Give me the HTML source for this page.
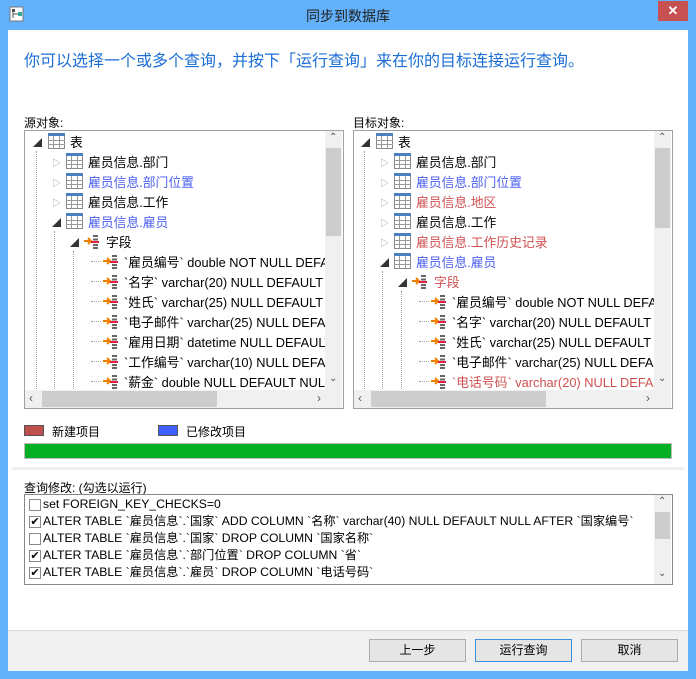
<!DOCTYPE html>
<html><head><meta charset="utf-8"><style>
*{margin:0;padding:0;box-sizing:border-box}
body{width:696px;height:679px;background:#63b1fa;font-family:"Liberation Sans","Noto Sans CJK SC",sans-serif;font-size:12px;color:#000;position:relative;overflow:hidden}
.a{position:absolute;white-space:nowrap}
.client{position:absolute;left:8px;top:30px;width:680px;height:641px;background:#fff}
.box{position:absolute;border:1px solid #a0a0a0;background:#fff;overflow:hidden}
.t{font-size:12.8px}
.b{color:#4a5ef0}.r{color:#d05050}
.vs{position:absolute;background:#f0f0f0}
.th{position:absolute;background:#cdcdcd}
.btn{position:absolute;top:639px;width:97px;height:23px;border:1px solid #adadad;background:#e5e5e5;text-align:center;line-height:21px;font-size:12px}
.dl{position:absolute;border-left:1px dotted #a0a0a0;width:0}
.dh{position:absolute;border-top:1px dotted #a0a0a0;height:0;width:10px}
.cb{position:absolute;width:12px;height:12px;border:1px solid #8a8a8a;background:#fff;font-size:11px;line-height:10px;text-align:center}
.q{font-size:12.2px;line-height:15px}
</style></head><body>
<svg class="a" style="left:9px;top:6px" width="16" height="16"><rect x="1" y="1" width="13" height="14" fill="#fff" stroke="#777"/><rect x="3" y="3" width="3" height="3" fill="#555"/><rect x="9" y="6" width="4" height="4" fill="#3a9"/><path d="M4 6v6M4 8h5" stroke="#555"/></svg>
<div class="a" style="left:0;width:696px;top:6px;text-align:center;font-size:14px;color:#222">同步到数据库</div>
<div class="a" style="left:658px;top:1px;width:30px;height:20px;background:#c75050;color:#fff;text-align:center;font-size:13px;line-height:19px;font-weight:bold">✕</div>
<div class="client"></div>
<div class="a" style="left:24px;top:47px;font-size:16px;color:#1c6ed4">你可以选择一个或多个查询，并按下「运行查询」来在你的目标连接运行查询。</div>
<div class="a" style="left:24px;top:114px">源对象:</div>
<div class="a" style="left:353px;top:114px">目标对象:</div>

<div class="box" style="left:24px;top:130px;width:320px;height:279px">
<div class="dl" style="left:11px;top:20px;height:240px"></div>
<div class="dl" style="left:29px;top:100px;height:160px"></div>
<div class="dl" style="left:48px;top:120px;height:140px"></div>
</div>
<div class="box" style="left:353px;top:130px;width:320px;height:279px">
<div class="dl" style="left:10px;top:20px;height:240px"></div>
<div class="dl" style="left:28px;top:140px;height:120px"></div>
<div class="dl" style="left:47px;top:160px;height:100px"></div>
</div>

<div id="trees"></div>
<script>
function ti(x,y){return '<svg class="a" style="left:'+x+'px;top:'+y+'px" width="17" height="16"><rect x="0.5" y="0.5" width="16" height="15" fill="#fff" stroke="#888"/><rect x="0" y="0" width="17" height="3" fill="#4a7fc1"/><path d="M0 7.5h17M0 11.5h17M5.5 3v13M11.5 3v13" stroke="#999"/></svg>';}
function fi(x,y){return '<svg class="a" style="left:'+x+'px;top:'+y+'px" width="18" height="16"><path d="M1 8h7M5 5l3 3-3 3" stroke="#f08000" stroke-width="2" fill="none"/><rect x="10" y="2" width="5" height="2" fill="#666"/><rect x="10" y="5.5" width="5" height="2" fill="#666"/><rect x="8" y="8" width="8" height="2" fill="#e02040"/><rect x="10" y="11" width="5" height="2" fill="#666"/><rect x="10" y="14" width="5" height="2" fill="#666"/></svg>';}
function tri(x,y,open){return '<div class="a" style="left:'+x+'px;top:'+y+'px;font-size:9px;color:'+(open?'#333':'#a0a0a0')+'">'+(open?'◢':'▷')+'</div>';}
function tree(ox,rows){
 var h='';
 rows.forEach(function(r,i){
  var y=1+i*20;
  var lvl=r[0],t=r[1],c=r[2]||'',k=r[3];
  if(lvl==0){h+=tri(ox+9,y+4,1)+ti(ox+24,y+1)+'<div class="a t '+c+'" style="left:'+(ox+46)+'px;top:'+(y)+'px">'+t+'</div>';}
  if(lvl==1){h+=tri(ox+28,y+4,k)+ti(ox+42,y+1)+'<div class="a t '+c+'" style="left:'+(ox+64)+'px;top:'+(y)+'px">'+t+'</div>';}
  if(lvl==2){h+=tri(ox+46,y+4,1)+fi(ox+59,y+1)+'<div class="a t '+c+'" style="left:'+(ox+82)+'px;top:'+(y)+'px">'+t+'</div>';}
  if(lvl==3){h+='<div class="dh" style="left:'+(ox+67)+'px;top:'+(y+9)+'px"></div>'+fi(ox+78,y+1)+'<div class="a t '+c+'" style="left:'+(ox+100)+'px;top:'+(y)+'px">'+t+'</div>';}
 });
 return h;
}
var L=[[0,'表'],[1,'雇员信息.部门'],[1,'雇员信息.部门位置','b'],[1,'雇员信息.工作'],[1,'雇员信息.雇员','b',1],[2,'字段'],
[3,'`雇员编号` double NOT NULL DEFAULT'],[3,'`名字` varchar(20) NULL DEFAULT NULL'],[3,'`姓氏` varchar(25) NULL DEFAULT NULL'],[3,'`电子邮件` varchar(25) NULL DEFAULT'],[3,'`雇用日期` datetime NULL DEFAULT NULL'],[3,'`工作编号` varchar(10) NULL DEFAULT'],[3,'`薪金` double NULL DEFAULT NULL']];
var R=[[0,'表'],[1,'雇员信息.部门'],[1,'雇员信息.部门位置','b'],[1,'雇员信息.地区','r'],[1,'雇员信息.工作'],[1,'雇员信息.工作历史记录','r'],[1,'雇员信息.雇员','b',1],[2,'字段','r'],
[3,'`雇员编号` double NOT NULL DEFAULT'],[3,'`名字` varchar(20) NULL DEFAULT NULL'],[3,'`姓氏` varchar(25) NULL DEFAULT NULL'],[3,'`电子邮件` varchar(25) NULL DEFAULT'],[3,'`电话号码` varchar(20) NULL DEFAULT','r']];
var h='<div class="a" style="left:25px;top:131px;width:300px;height:259px;overflow:hidden">'+tree(-1,L)+'</div>';
h+='<div class="a" style="left:354px;top:131px;width:300px;height:259px;overflow:hidden">'+tree(-2,R)+'</div>';
document.getElementById('trees').innerHTML=h;
</script>

<div class="vs" style="left:325px;top:131px;width:17px;height:259px"></div>
<div class="th" style="left:326px;top:148px;width:15px;height:88px"></div>
<div class="a" style="left:329px;top:132px;font-size:10px;color:#555">⌃</div>
<div class="a" style="left:329px;top:373px;font-size:10px;color:#555">⌄</div>
<div class="vs" style="left:25px;top:390px;width:317px;height:18px"></div>
<div class="th" style="left:42px;top:391px;width:175px;height:16px"></div>
<div class="a" style="left:29px;top:391px;font-size:12px;color:#555">‹</div>
<div class="a" style="left:317px;top:391px;font-size:12px;color:#555">›</div>

<div class="vs" style="left:654px;top:131px;width:17px;height:259px"></div>
<div class="th" style="left:655px;top:148px;width:15px;height:80px"></div>
<div class="a" style="left:658px;top:132px;font-size:10px;color:#555">⌃</div>
<div class="a" style="left:658px;top:373px;font-size:10px;color:#555">⌄</div>
<div class="vs" style="left:354px;top:390px;width:317px;height:18px"></div>
<div class="th" style="left:371px;top:391px;width:175px;height:16px"></div>
<div class="a" style="left:358px;top:391px;font-size:12px;color:#555">‹</div>
<div class="a" style="left:646px;top:391px;font-size:12px;color:#555">›</div>

<div class="a" style="left:24px;top:425px;width:20px;height:11px;background:#c0504d;border:1px solid #555"></div>
<div class="a" style="left:52px;top:423px">新建项目</div>
<div class="a" style="left:158px;top:425px;width:20px;height:11px;background:#4060ff;border:1px solid #555"></div>
<div class="a" style="left:186px;top:423px">已修改项目</div>
<div class="a" style="left:24px;top:443px;width:648px;height:16px;background:#06b025;border:1px solid #bcbcbc"></div>
<div class="a" style="left:12px;top:467px;width:672px;height:3px;background:#f0f0f0"></div>

<div class="a" style="left:24px;top:479px">查询修改: (勾选以运行)</div>
<div class="box" style="left:24px;top:494px;width:649px;height:91px;border-color:#828790"></div>
<div class="vs" style="left:654px;top:495px;width:17px;height:89px"></div>
<div class="th" style="left:655px;top:512px;width:15px;height:27px"></div>
<div class="a" style="left:658px;top:496px;font-size:10px;color:#555">⌃</div>
<div class="a" style="left:658px;top:568px;font-size:10px;color:#555">⌄</div>
<div class="cb" style="left:29px;top:499px"></div><div class="a q" style="left:43px;top:497px">set FOREIGN_KEY_CHECKS=0</div>
<div class="cb" style="left:29px;top:516px">✔</div><div class="a q" style="left:43px;top:514px">ALTER TABLE `雇员信息`.`国家` ADD COLUMN `名称` varchar(40) NULL DEFAULT NULL AFTER `国家编号`</div>
<div class="cb" style="left:29px;top:533px"></div><div class="a q" style="left:43px;top:531px">ALTER TABLE `雇员信息`.`国家` DROP COLUMN `国家名称`</div>
<div class="cb" style="left:29px;top:550px">✔</div><div class="a q" style="left:43px;top:548px">ALTER TABLE `雇员信息`.`部门位置` DROP COLUMN `省`</div>
<div class="cb" style="left:29px;top:567px">✔</div><div class="a q" style="left:43px;top:565px">ALTER TABLE `雇员信息`.`雇员` DROP COLUMN `电话号码`</div>

<div class="a" style="left:8px;top:630px;width:680px;height:41px;background:#f0f0f0;border-top:1px solid #dcdcdc"></div>
<div class="btn" style="left:369px">上一步</div>
<div class="btn" style="left:475px;border-color:#3c8fe0">运行查询</div>
<div class="btn" style="left:581px">取消</div>
</body></html>
